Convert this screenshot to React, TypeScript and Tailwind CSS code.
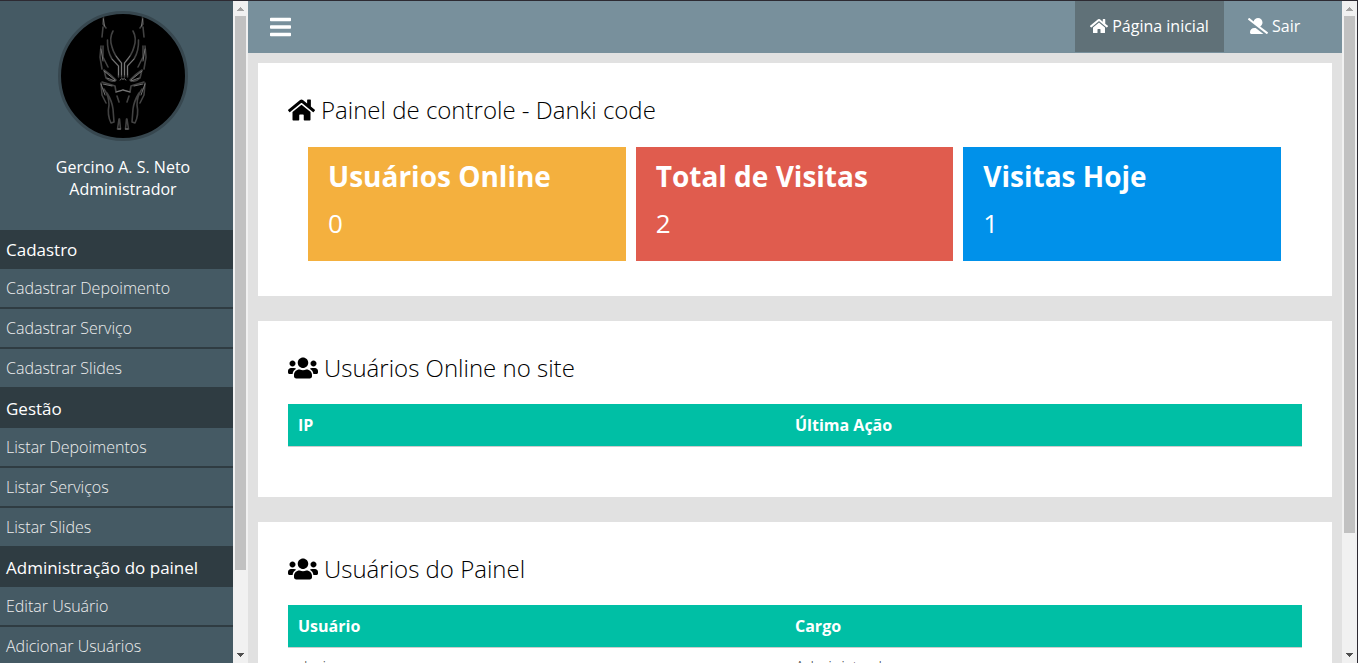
import React from "react";
import { FaBars, FaHome, FaUserAltSlash, FaUsers } from "react-icons/fa";

const menu = [
  { title: "Cadastro", items: ["Cadastrar Depoimento", "Cadastrar Serviço", "Cadastrar Slides"] },
  { title: "Gestão", items: ["Listar Depoimentos", "Listar Serviços", "Listar Slides"] },
  { title: "Administração do painel", items: ["Editar Usuário", "Adicionar Usuários"] },
];

const stats = [
  { title: "Usuários Online", value: "0", color: "bg-[#f4b03e]" },
  { title: "Total de Visitas", value: "2", color: "bg-[#e05c4e]" },
  { title: "Visitas Hoje", value: "1", color: "bg-[#0091ea]" },
];

function HalfMask() {
  return (
    <g fill="none" strokeLinecap="round" strokeLinejoin="round">
      <g stroke="#424242" strokeWidth="1.6">
        <path d="M45.500 6 L45 13 L48 17 M45 16 L44 26" />
        <path d="M55 20 Q51 27 54 36 Q56 44 63.500 52 L63.500 66" />
        <path d="M49.500 29 Q49 40 54 48 L60.500 55 L60.500 66" />
        <path d="M43 35 L42 46 L44 58 M45 35 L45 46 L50 56" />
        <path d="M46 59 Q52 63 58 69 Q53 72 48 67 Z" />
        <path d="M44 71 L54 74 L57 75 L58 81 L65 79" />
        <path d="M43 72 L44 84 L48 92 M46 78 Q51 85 51 94 Q49 104 53 112 L56 111 L55 98 Q54 90 49 82" />
        <path d="M59 85 L61 91 M61 108 L59.500 118 L62.500 118 L61.500 108" />
      </g>
      <g stroke="#808080" strokeWidth="0.9">
        <path d="M45.500 8 L46.500 15 M43 38 L45 50 M54 48 L60.500 55 L60.500 64 M58 45 L63.500 52 L63.500 64" />
        <path d="M46 60 L57 69 M49 67 L57 70 M45 73 L54 75 M58 81 L65 79" />
        <path d="M43 73 L47 84 M60 118 L62.500 118 M62 69 Q64 66.500 65 68" />
      </g>
    </g>
  );
}

function Avatar() {
  return (
    <div className="h-[130px] w-[130px] overflow-hidden rounded-full border-[3px] border-[#37474f] bg-black">
      <svg viewBox="3 3 124 124" className="block h-full w-full">
        <HalfMask />
        <g transform="translate(130 0) scale(-1 1)">
          <HalfMask />
        </g>
      </svg>
    </div>
  );
}

function Scrollbar({ thumb }: { thumb: string }) {
  return (
    <div className="flex w-[15px] shrink-0 flex-col items-center bg-[#f1f1f1]">
      <svg className="h-[15px] w-[15px] shrink-0" viewBox="0 0 15 15" shapeRendering="crispEdges">
        <path d="M7 6h1v1h1v1h1v1h1v1H4V9h1V8h1V7h1z" fill="#a3a3a3" />
      </svg>
      <div className={`w-[11px] shrink-0 bg-[#c1c1c1] ${thumb}`} />
      <svg className="mt-auto h-[15px] w-[15px] shrink-0" viewBox="0 0 15 15" shapeRendering="crispEdges">
        <path d="M4 5h7v1h-1v1H9v1H8v1H7V8H6V7H5V6H4z" fill="#505050" />
      </svg>
    </div>
  );
}

function Heading({ icon, children }: { icon: React.ReactNode; children: React.ReactNode }) {
  return (
    <h2 className="flex h-[33px] items-center gap-[6px] text-2xl font-light text-black">
      {icon}
      <span>{children}</span>
    </h2>
  );
}

function Table({ columns, rows }: { columns: string[]; rows: string[][] }) {
  return (
    <div className="text-base leading-[22px]">
      <div className="flex border-b border-[#ccc] bg-[#00bfa5] py-[10px] font-bold text-white">
        {columns.map((c) => (
          <div key={c} className="shrink-0 basis-[497px] pl-[10px]">{c}</div>
        ))}
      </div>
      {rows.map((row) => (
        <div key={row[0]} className="flex border-b border-[#ccc] py-2 font-light text-[#444]">
          {row.map((c) => (
            <div key={c} className="shrink-0 basis-[497px] pl-[10px]">{c}</div>
          ))}
        </div>
      ))}
    </div>
  );
}

export default function App() {
  return (
    <div className="flex h-[663px] w-[1358px] overflow-hidden border-t border-r border-[#2d2a32] bg-[#e1e1e1] font-['Open_Sans',sans-serif]">
      <aside className="flex w-[248px] shrink-0">
        <div className="w-[233px] overflow-hidden bg-[#455a64]">
          <div className="flex h-[229px] flex-col items-center pt-[10px] pl-[13px] text-center">
            <Avatar />
            <p className="mt-[15px] text-base leading-[22px] text-white">
              Gercino A. S. Neto
              <br />
              Administrador
            </p>
          </div>
          <nav>
            {menu.map((group) => (
              <div key={group.title}>
                <h3 className="h-[39px] bg-[#2f3c42] pl-[6px] text-[17px] leading-[39px] text-white">{group.title}</h3>
                {group.items.map((item) => (
                  <a key={item} className="block h-10 border-b-2 border-[#2f3c42] pl-[6px] text-base leading-[38px] font-light text-[#eee]">
                    {item}
                  </a>
                ))}
              </div>
            ))}
          </nav>
        </div>
        <Scrollbar thumb="h-[554px]" />
      </aside>

      <div className="flex min-w-0 flex-1 flex-col">
        <header className="flex h-[52px] shrink-0 items-start justify-between bg-[#78909c] pl-[21.5px] text-white">
          <FaBars className="mt-[14px] h-6 w-[21px]" />
          <nav className="flex h-[51px] text-base">
            <a className="flex w-[149px] items-center justify-center gap-1 bg-[#607178] pb-px">
              <FaHome className="h-4 w-[18px]" />
              Página inicial
            </a>
            <a className="flex w-[118px] items-center gap-1 pb-px pl-6">
              <FaUserAltSlash className="h-4 w-5" />
              Sair
            </a>
          </nav>
        </header>

        <main className="flex min-h-0 flex-1 flex-col gap-[25px] overflow-hidden px-[10px] pt-[10px]">
          <section className="h-[233px] shrink-0 bg-white px-[30px] pt-[30px]">
            <Heading icon={<FaHome className="h-6 w-[27px]" />}>Painel de controle - Danki code</Heading>
            <div className="mt-[21px] flex gap-[10px] pr-[21px] pl-5">
              {stats.map((s) => (
                <div key={s.title} className={`h-[114px] flex-1 pt-[10px] pl-5 text-white ${s.color}`}>
                  <h4 className="text-[28px] leading-[38px] font-bold">{s.title}</h4>
                  <p className="mt-[10px] text-[26px] leading-9">{s.value}</p>
                </div>
              ))}
            </div>
          </section>

          <section className="flex h-[176px] shrink-0 flex-col gap-5 bg-white px-[30px] pt-[30px]">
            <Heading icon={<FaUsers className="h-6 w-[30px]" />}>Usuários Online no site</Heading>
            <Table columns={["IP", "Última Ação"]} rows={[]} />
          </section>

          <section className="flex h-[200px] shrink-0 flex-col gap-5 bg-white px-[30px] pt-[30px]">
            <Heading icon={<FaUsers className="h-6 w-[30px]" />}>Usuários do Painel</Heading>
            <Table columns={["Usuário", "Cargo"]} rows={[["deri", "Administrador"]]} />
          </section>
        </main>
      </div>
      <Scrollbar thumb="h-[517px]" />
    </div>
  );
}
